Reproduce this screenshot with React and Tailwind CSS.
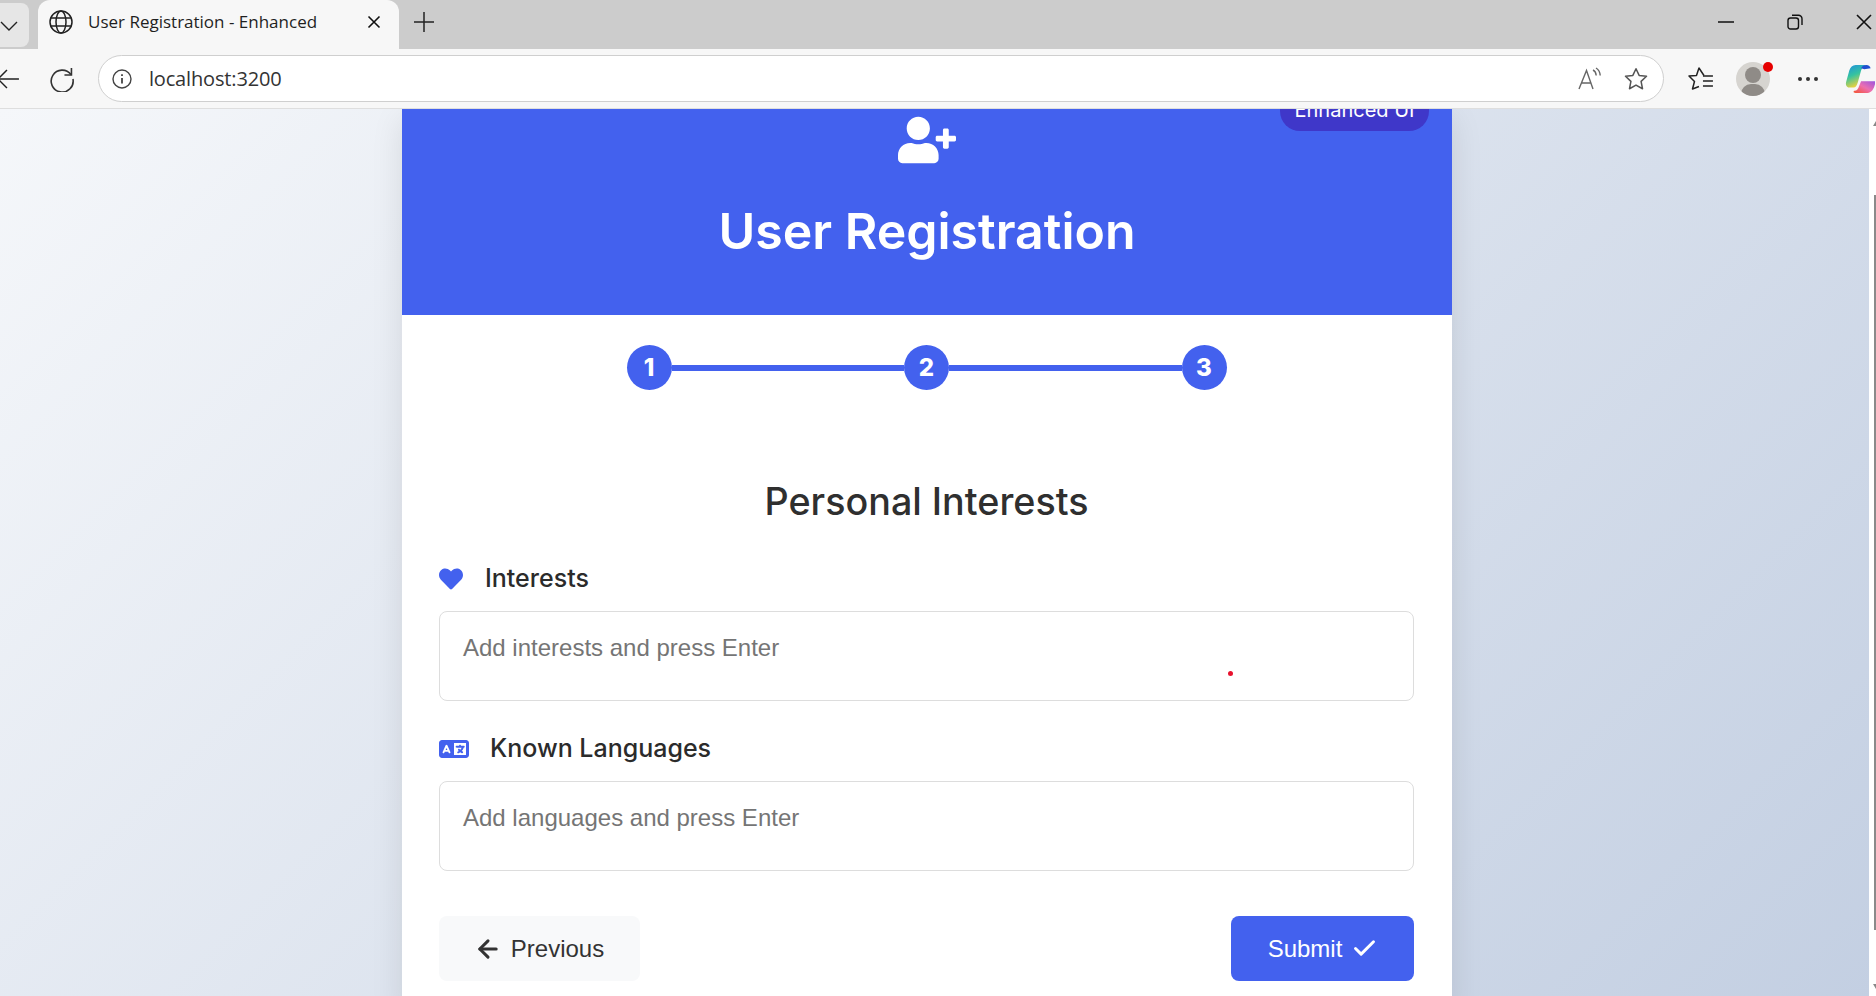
import React from "react";
import { FaUserPlus, FaHeart } from "react-icons/fa";
import { FaLanguage } from "react-icons/fa6";
import { ArrowLeft, Check } from "lucide-react";

const Globe = () => (
  <svg width="26" height="26" viewBox="0 0 26 26" fill="none" stroke="#222" strokeWidth="1.5">
    <circle cx="13" cy="13" r="11" />
    <ellipse cx="13" cy="13" rx="5" ry="11" />
    <path d="M2.8 9h20.4M2.8 17h20.4" />
  </svg>
);

const Chrome = () => (
  <div className="shrink-0 font-['Open_Sans',sans-serif]">
    <div className="h-[49px] bg-[#cccccc] flex items-start">
      <div className="w-[29px] h-[44px] mt-[3px] bg-[#e6e6e6] rounded-r-lg flex items-center justify-end pr-[11px]">
        <svg width="18" height="18" viewBox="0 0 18 18" fill="none" stroke="#222" strokeWidth="1.4"><path d="M1 6l8 8 8-8" /></svg>
      </div>
      <div className="ml-[9px] w-[361px] h-[49px] bg-[#f7f7f7] rounded-t-xl flex items-center pl-[10px] pb-[6px]">
        <Globe />
        <span className="ml-[14px] w-[279px] text-[17px] text-[#1f1f1f] whitespace-nowrap">User Registration - Enhanced</span>
        <svg width="14" height="14" viewBox="0 0 14 14" stroke="#111" strokeWidth="1.6"><path d="M1.5 1.500l11 11M12.500 1.500l-11 11" /></svg>
      </div>
      <div className="ml-[14px] h-[44px] flex items-center">
        <svg width="22" height="22" viewBox="0 0 22 22" stroke="#222" strokeWidth="1.5"><path d="M11 1v20M1 11h20" /></svg>
      </div>
      <div className="ml-auto h-[44px] flex items-center">
        <svg width="16" height="16" viewBox="0 0 16 16" stroke="#111" strokeWidth="1.5"><path d="M0 8h16" /></svg>
        <svg className="ml-[53px]" width="16" height="16" viewBox="0 0 16 16" fill="none" stroke="#111" strokeWidth="1.4">
          <rect x="1" y="4" width="10.5" height="11" rx="2.5" />
          <path d="M5 1.200h6.500a3.500 3.500 0 0 1 3.500 3.500V11" />
        </svg>
        <svg className="ml-[53px] mr-[4px]" width="16" height="16" viewBox="0 0 16 16" stroke="#111" strokeWidth="1.6"><path d="M1 1l14 14M15 1L1 15" /></svg>
      </div>
    </div>
    <div className="h-[60px] bg-[#f7f7f7] border-b border-[#dedede] flex items-center">
      <svg className="-ml-[3px]" width="24" height="22" viewBox="0 0 24 22" fill="none" stroke="#222" strokeWidth="1.5"><path d="M1 11h21M10 2l-9 9 9 9" /></svg>
      <svg className="ml-[28px]" width="26" height="26" viewBox="0 0 26 26" fill="none" stroke="#333" strokeWidth="1.6">
        <path d="M22 8.500A11 11 0 1 0 24 13" />
        <path d="M22.500 2v7h-7" />
      </svg>
      <div className="ml-[23px] w-[1570px] h-[47px] bg-white border border-[#cfcfcf] rounded-full flex items-center pl-[13px] pr-[12px]">
        <svg width="20" height="20" viewBox="0 0 20 20" fill="none" stroke="#444" strokeWidth="1.4">
          <circle cx="10" cy="10" r="9" />
          <path d="M10 9v5.500" strokeWidth="1.8" />
          <path d="M10 5.200v1.800" strokeWidth="1.8" />
        </svg>
        <span className="ml-[17px] text-[20px] text-[#333] leading-none tracking-[-0.15px] mt-[1px]">localhost:3200</span>
        <svg className="ml-auto" width="24" height="24" viewBox="0 0 24 24" fill="none" stroke="#666" strokeWidth="1.4">
          <path d="M1 22L8.500 3.500 15 22M3.500 16h10" />
          <path d="M15 3c2 1 3 3 3.200 5.500M18 1c2.500 1.500 4 4 4.200 7.500" />
        </svg>
        <svg className="ml-[21px] mr-[2px]" width="26" height="26" viewBox="0 0 24 24" fill="none" stroke="#555" strokeWidth="1.4" strokeLinejoin="round">
          <path d="M12 2.500l2.900 6.200 6.800.8-5 4.700 1.300 6.800-6-3.400-6 3.400 1.300-6.800-5-4.700 6.800-.8z" />
        </svg>
      </div>
      <svg className="ml-[24px]" width="26" height="26" viewBox="0 0 26 26" fill="none" stroke="#222" strokeWidth="1.500" strokeLinejoin="round">
        <path d="M16 9.500L11 2 8.500 9.500 1 10l5.500 5.500L4.500 23l6.500-2.500" />
        <path d="M15 10h10M15 15h10M15 20h10" />
      </svg>
      <div className="relative ml-[22px] w-[34px] h-[34px] rounded-full bg-[#d6d4d0] overflow-hidden">
        <div className="absolute left-[9px] top-[5px] w-[16px] h-[16px] rounded-full bg-[#8f8b87]" />
        <div className="absolute left-[5px] top-[22px] w-[24px] h-[20px] rounded-full bg-[#8f8b87]" />
      </div>
      <div className="relative -ml-[7px] -mt-[24px] w-[10px] h-[10px] rounded-full bg-[#e60000]" />
      <div className="ml-[25px] flex gap-[4px]">
        <span className="w-[4px] h-[4px] rounded-full bg-[#333]" />
        <span className="w-[4px] h-[4px] rounded-full bg-[#333]" />
        <span className="w-[4px] h-[4px] rounded-full bg-[#333]" />
      </div>
      <svg className="ml-[26px] shrink-0" width="32" height="30" viewBox="0 0 28 28" fill="none">
        <defs>
          <linearGradient id="cp1" x1="0" y1="0" x2="0.4" y2="1">
            <stop offset="0" stopColor="#1d8fe0" />
            <stop offset="0.5" stopColor="#35c3a0" />
            <stop offset="1" stopColor="#f2d23a" />
          </linearGradient>
          <linearGradient id="cp2" x1="0" y1="1" x2="1" y2="0">
            <stop offset="0" stopColor="#f5532f" />
            <stop offset="0.5" stopColor="#ec6fb0" />
            <stop offset="1" stopColor="#9a55e0" />
          </linearGradient>
        </defs>
        <path d="M3 22c-2-1-2.500-3-2-5L4 6c1-3 3-5 6-5h11c-3 0-5 2-6 5l-3 11c-1 3-2 5-4 5z" fill="url(#cp1)" />
        <path d="M10 27c-3 0-2-2-1-2 2 0 3.500-2 4-4l2-5h13v3c-1 4-3 8-7 8z" fill="url(#cp2)" />
        <path d="M15 4c1-2 3-3 5-3 2 0 3 1 4 3l-6 1z" fill="#1f4fd0" />
      </svg>
    </div>
  </div>
);

const Field = ({ icon, label, gap, placeholder, mt }) => (
  <div className={mt}>
    <div className={`flex items-center h-[30px] ${gap}`}>
      {icon}
      <span className="font-['Inter',sans-serif] font-medium text-[25px] text-[#2b2b2b] whitespace-nowrap">{label}</span>
    </div>
    <div className="mt-[17px] h-[90px] bg-white border border-[#dddddd] rounded-lg pl-[23px] pt-[22px] font-['Liberation_Sans',sans-serif] text-[24px] leading-[28px] text-[#757575]">
      {placeholder}
    </div>
  </div>
);

const Step = ({ n }) => (
  <div className="w-[45px] h-[45px] rounded-full bg-[#4361ee] text-white flex items-center justify-center font-['Inter',sans-serif] font-extrabold text-[24px] shrink-0">
    {n}
  </div>
);

export default function App() {
  return (
    <div className="h-[996px] w-[1876px] overflow-hidden flex flex-col">
      <Chrome />
      <div className="flex-1 flex overflow-hidden bg-[linear-gradient(135deg,#f5f7fa_0%,#c3cfe2_100%)]">
        <div className="flex-1 overflow-hidden pl-[402px]">
          <div className="w-[1050px] h-[900px] bg-white shadow-[0_10px_30px_rgba(0,0,0,0.1)] flex flex-col">
            <div className="relative h-[206px] bg-[#4361ee] overflow-hidden flex flex-col items-center text-white">
              <div className="absolute right-[23px] -top-[20px] h-[42px] w-[149px] rounded-[20px] bg-[#3f37c9] flex items-center justify-center font-['Inter',sans-serif] text-[20px] whitespace-nowrap">
                Enhanced UI
              </div>
              <FaUserPlus className="mt-[2px] shrink-0" size={58} />
              <h1 className="mt-[29px] font-['Inter',sans-serif] font-semibold text-[50px] leading-[66px] whitespace-nowrap">User Registration</h1>
            </div>
            <div className="pl-[37px] pr-[38px] pt-[30px]">
              <div className="flex items-center justify-center">
                <Step n="1" />
                <div className="w-[232.5px] h-[6px] bg-[#4361ee]" />
                <Step n="2" />
                <div className="w-[232.5px] h-[6px] bg-[#4361ee]" />
                <Step n="3" />
              </div>
              <h2 className="mt-[86px] text-center font-['Inter',sans-serif] font-medium text-[37.7px] leading-[50px] text-[#2f2f2f]">Personal Interests</h2>
              <Field
                mt="mt-[38px]"
                gap="gap-[22px]"
                icon={<FaHeart className="text-[#4361ee] shrink-0" size={24} />}
                label="Interests"
                placeholder="Add interests and press Enter"
              />
              <Field
                mt="mt-[33px]"
                gap="gap-[21px]"
                icon={<FaLanguage className="text-[#4361ee] shrink-0" size={30} />}
                label="Known Languages"
                placeholder="Add languages and press Enter"
              />
              <div className="mt-[45px] flex justify-between font-['Liberation_Sans',sans-serif] text-[24px]">
                <div className="w-[201px] h-[65px] rounded-lg bg-[#f8f9fa] text-[#333] flex items-center justify-center gap-[9px] pr-[1px]">
                  <ArrowLeft size={28} strokeWidth={2.6} />
                  <span>Previous</span>
                </div>
                <div className="w-[183px] h-[65px] rounded-lg bg-[#4361ee] text-white flex items-center justify-center gap-[9px] pl-[1px]">
                  <span>Submit</span>
                  <Check size={27} strokeWidth={2.6} />
                </div>
              </div>
            </div>
          </div>
        </div>
        <div className="relative w-[7px] bg-white shrink-0 overflow-hidden">
          <div className="absolute right-0 top-[86px] w-[2px] h-[735px] bg-[#8a8a8a]" />
          <div className="absolute left-[4px] top-[12px] w-0 h-0 border-x-[3px] border-x-transparent border-b-[5px] border-b-[#888]" />
          <div className="absolute left-[4px] top-[875px] w-0 h-0 border-x-[3px] border-x-transparent border-t-[5px] border-t-[#888]" />
        </div>
      </div>
      <div className="absolute left-[1228px] top-[671px] w-[5px] h-[5px] rounded-full bg-[#e8112d]" />
    </div>
  );
}
